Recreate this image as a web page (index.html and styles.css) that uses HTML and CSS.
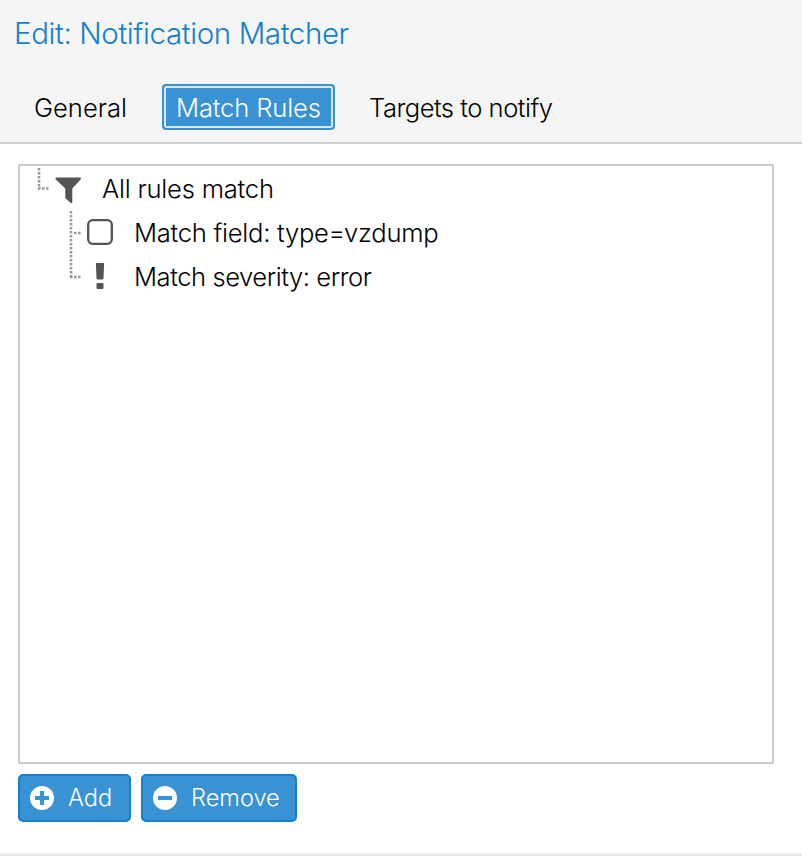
FILE: index.html
```
<!DOCTYPE html>
<html lang="en">
<head>
	<meta charset="utf-8">
	<title>Edit: Notification Matcher</title>
	<link rel="stylesheet" href="styles.css">
</head>
<body>
	<div class="window">
		<div class="header">
			<h1 class="title">Edit: Notification Matcher</h1>
			<div class="tabs">
				<a class="tab general">General</a>
				<a class="tab rules current">Match Rules</a>
				<a class="tab targets">Targets to notify</a>
			</div>
		</div>
		<div class="content">
			<ul class="tree">
				<li class="row">
					<svg class="elbow" width="32" height="44"><path d="M19 0V21" /><path d="M18 20.5H29" /></svg>
					<svg class="icon" width="32" height="44" fill="#555"><path d="M4.3 9.5H28Q29.8 9.9 28.6 11.4L20.3 20.6V33.7Q20.2 35.5 18.6 34.7L13.3 30.3V20.6L3.8 11.4Q2.6 9.9 4.3 9.5Z" /></svg>
					<span class="text all">All rules match</span>
				</li>
				<li class="row child">
					<svg class="elbow" width="32" height="44"><path d="M19 -1V44" /><path d="M22 21H29" /></svg>
					<svg class="icon" width="32" height="44"><rect x="4.2" y="8.2" width="23.6" height="23.6" rx="4.5" fill="none" stroke="#555" stroke-width="2.3" /></svg>
					<span class="text field">Match field: type=vzdump</span>
				</li>
				<li class="row child">
					<svg class="elbow" width="32" height="44"><path d="M19 -1V22" /><path d="M18 21H29" /></svg>
					<svg class="icon" width="32" height="44" fill="#555"><path d="M12.6 7H19.4Q20.2 7 20.1 8L19.5 22.5Q19.4 23.5 18.5 23.5H13.5Q12.6 23.5 12.5 22.5L11.9 8Q11.8 7 12.6 7Z" /><rect x="12.5" y="27" width="7" height="6" rx="1" /></svg>
					<span class="text severity">Match severity: error</span>
				</li>
			</ul>
			<div class="btnbar">
				<a class="btn add"><svg width="24" height="24"><circle cx="12" cy="12" r="12" fill="#FFF" /><path d="M5 12H19M12 5V19" stroke="#3892D4" stroke-width="4" /></svg><span>Add</span></a>
				<a class="btn remove"><svg width="24" height="24"><circle cx="12" cy="12" r="12" fill="#FFF" /><path d="M5 12H19" stroke="#3892D4" stroke-width="4" /></svg><span>Remove</span></a>
			</div>
		</div>
		<div class="footer"></div>
	</div>
</body>
</html>
```
FILE: styles.css
```
*{margin:0;padding:0;box-sizing:border-box;}
body{background:#FFF;color:#000;font-family:Inter,"Liberation Sans",sans-serif;font-weight:300;}
.window{height:856px;display:flex;flex-direction:column;overflow:hidden;}

.header{height:144px;background:#F5F5F5;border-bottom:2px solid #CFCFCF;}
.title{padding:13px 0 0 14px;height:84px;font-size:29.5px;line-height:40px;font-weight:300;letter-spacing:-0.39px;color:#157FCC;white-space:nowrap;}
.tabs{display:flex;gap:16px;padding-left:20px;}
.tab{height:46px;padding:0 14px;line-height:48px;font-size:25.6px;white-space:nowrap;}
.general{width:126px;}
.rules{width:173px;letter-spacing:-0.15px;}
.tab.current{background:#3892D4;color:#FFF;border:2px solid #3892D4;border-radius:4px;box-shadow:inset 0 0 0 2px #D7E9F6;line-height:44px;padding:0 12px;}
.targets{padding-left:18px;letter-spacing:-0.5px;}

.content{flex:1;padding:20px 28px 0 18px;}
.tree{height:600px;border:2px solid #CFCFCF;padding-top:2px;list-style:none;}
.row{display:flex;height:44px;}
.child{padding-left:32px;}
.elbow{overflow:visible;}
.elbow path{fill:none;stroke:#999;stroke-width:2.5;stroke-dasharray:2.5 1.5;}
.text{padding-left:18px;font-size:25.6px;line-height:42px;white-space:nowrap;}
.all{letter-spacing:-0.22px;}
.field{letter-spacing:-0.27px;}
.severity{letter-spacing:-0.45px;}

.btnbar{display:flex;gap:10px;padding-top:10px;}
.btn{display:flex;align-items:center;height:48px;padding:0 10px;border:2px solid #157FCC;border-radius:5px;background:#3892D4;color:#FFF;font-size:23.6px;}
.btn span{padding:0 0 2px 14px;white-space:nowrap;}
.add{width:113px;}
.remove{width:156px;}

.footer{height:4px;background:#E6E6E6;border-top:2px solid #F5F5F5;}
```
